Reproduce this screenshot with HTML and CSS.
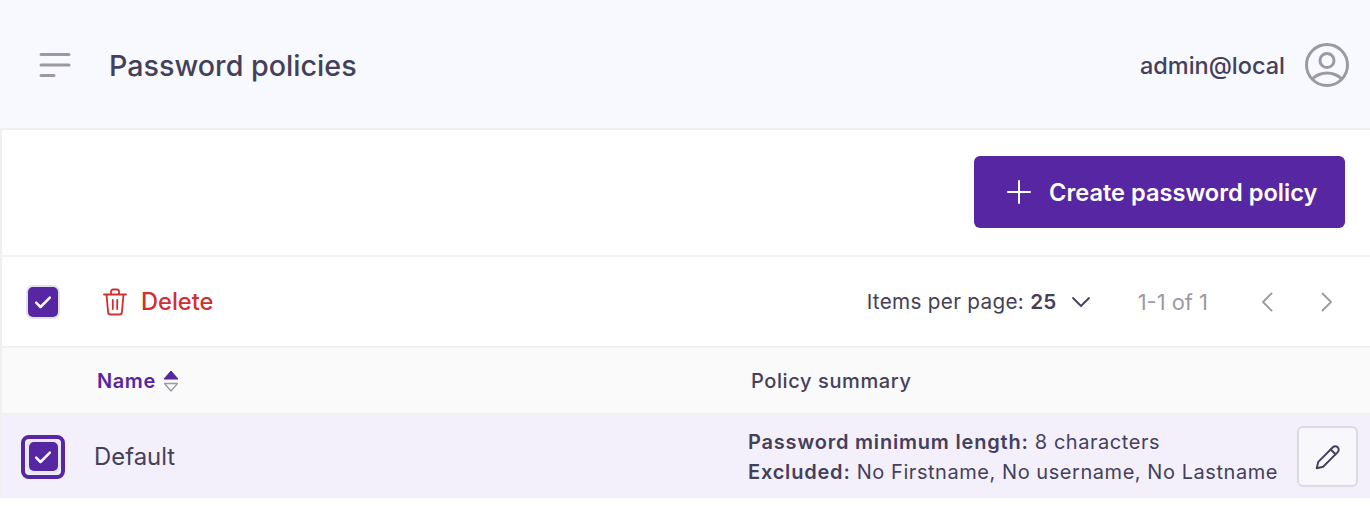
FILE: index.html
```html
<!DOCTYPE html>
<html lang="en">
<head>
    <meta charset="UTF-8">
    <title>Password policies</title>
    <link rel="stylesheet" href="styles.css">
</head>
<body>
    <header class="topbar">
        <div class="topbar-left">
            <svg class="menu-icon" width="32" height="26" viewBox="0 0 32 26" fill="none" stroke="#9c99a3" stroke-width="3" stroke-linecap="round">
                <path d="M2 2.500h28M2 13h28M2 23.500h13"/>
            </svg>
            <h1 class="page-title">Password policies</h1>
        </div>
        <div class="user">
            <span class="user-name">admin@local</span>
            <svg width="46" height="46" viewBox="0 0 46 46" fill="none" stroke="#9c99a3" stroke-width="3">
                <circle cx="23" cy="23" r="20.500"/>
                <circle cx="23" cy="18.500" r="7"/>
                <path d="M8 37c4.500-4 9-6 15-6s10.500 2 15 6"/>
            </svg>
        </div>
    </header>

    <main class="content">
        <!-- create button -->
        <div class="actions">
            <button class="create-button">
                <svg width="24" height="24" viewBox="0 0 24 24" fill="none" stroke="#fff" stroke-width="2" stroke-linecap="round">
                    <path d="M12 1v22M1 12h22"/>
                </svg>
                Create password policy
            </button>
        </div>

        <!-- bulk actions and paging -->
        <div class="bulk-bar">
            <div class="bulk-left">
                <span class="checkbox">
                    <svg width="20" height="20" viewBox="0 0 16 16" fill="none" stroke="#fff" stroke-width="2" stroke-linecap="round" stroke-linejoin="round">
                        <path d="M2.500 8.500l3.500 3.500 7.500-7.500"/>
                    </svg>
                </span>
                <a href="#" class="delete">
                    <svg width="26" height="28" viewBox="0 0 26 28" fill="none" stroke="#d32f2f" stroke-width="1.800" stroke-linecap="round" stroke-linejoin="round">
                        <path d="M2 6.500h22M9 6.500V3.500a2 2 0 0 1 2-2h4a2 2 0 0 1 2 2v3M4.500 6.500l1.600 17.600a2.500 2.500 0 0 0 2.500 2.400h8.800a2.500 2.500 0 0 0 2.500-2.400l1.600-17.600M10.800 12v9M15.200 12v9"/>
                    </svg>
                    Delete
                </a>
            </div>
            <div class="paging">
                <span class="per-page">Items per page: <strong>25</strong></span>
                <svg class="per-page-arrow" width="20" height="12" viewBox="0 0 20 12" fill="none" stroke="#45405a" stroke-width="1.800" stroke-linecap="round" stroke-linejoin="round">
                    <path d="M2 2l8 8 8-8"/>
                </svg>
                <span class="range">1-1 of 1</span>
                <svg class="prev" width="12" height="20" viewBox="0 0 12 20" fill="none" stroke="#9c99a3" stroke-width="1.800" stroke-linecap="round" stroke-linejoin="round">
                    <path d="M10.500 1.500L2 10l8.500 8.500"/>
                </svg>
                <svg class="next" width="12" height="20" viewBox="0 0 12 20" fill="none" stroke="#9c99a3" stroke-width="1.800" stroke-linecap="round" stroke-linejoin="round">
                    <path d="M1.500 1.500L10 10l-8.500 8.500"/>
                </svg>
            </div>
        </div>

        <!-- table -->
        <div class="table-head">
            <div class="col-name sorted">
                Name
                <svg width="18" height="24" viewBox="0 0 18 24" stroke-linejoin="round">
                    <path d="M9 2l7 8H2z" fill="#5726a2" stroke="#5726a2"/>
                    <path d="M2.500 14.500h13L9 22z" fill="none" stroke="#9c99a3" stroke-width="1.300"/>
                </svg>
            </div>
            <div class="col-summary">Policy summary</div>
        </div>
        <div class="table-row">
            <span class="row-check">
                <span class="checkbox">
                    <svg width="20" height="20" viewBox="0 0 16 16" fill="none" stroke="#fff" stroke-width="2" stroke-linecap="round" stroke-linejoin="round">
                        <path d="M2.500 8.500l3.500 3.500 7.500-7.500"/>
                    </svg>
                </span>
            </span>
            <div class="row-name">Default</div>
            <div class="row-summary">
                <div><strong>Password minimum length:</strong> 8 characters</div>
                <div><strong>Excluded:</strong> No Firstname, No username, No Lastname</div>
            </div>
            <button class="edit-button">
                <svg width="28" height="28" viewBox="0 0 26 26" fill="none" stroke="#45405a" stroke-width="1.800" stroke-linecap="round" stroke-linejoin="round">
                    <path d="M2.500 23.500l1.500-6L17.500 4a3 3 0 0 1 4.500 4.500L8.500 22z"/>
                    <path d="M15.500 6l4.500 4.500"/>
                </svg>
            </button>
        </div>
    </main>
</body>
</html>
```

FILE: styles.css
```css
* {
    box-sizing: border-box;
}

body {
    margin: 0;
    height: 506px;
    overflow: hidden;
    font-family: 'Inter', sans-serif;
    background-color: #fff;
    color: #45405a;
}

/* top bar */
.topbar {
    height: 128px;
    padding: 2px 20px 0 39px;
    display: flex;
    align-items: center;
    justify-content: space-between;
    background-color: #f8f9fe;
}

.topbar-left {
    display: flex;
    align-items: center;
}

.menu-icon {
    margin: 0 38px 0 0;
}

.page-title {
    margin: 0;
    font-size: 28.700px;
    font-weight: 500;
}

.user {
    display: flex;
    align-items: center;
    gap: 19px;
}

.user-name {
    font-size: 23.500px;
    font-weight: 500;
}

/* page content */
.content {
    border-top: 2px solid #f0f0f0;
    border-left: 2px solid #f0f0f0;
}

.actions {
    height: 127px;
    padding: 26px 25px 0 0;
    display: flex;
    justify-content: flex-end;
    align-items: flex-start;
    border-bottom: 2px solid #f0f0f0;
}

.create-button {
    width: 371px;
    height: 72px;
    padding: 0 0 0 33px;
    border: none;
    border-radius: 6px;
    display: flex;
    align-items: center;
    gap: 18px;
    background-color: #5726a2;
    color: #fff;
    font-family: inherit;
    font-size: 23.600px;
    font-weight: 600;
}

.bulk-bar {
    height: 91px;
    padding: 0 37px 0 26px;
    display: flex;
    align-items: center;
    justify-content: space-between;
    border-bottom: 2px solid #f0f0f0;
}

.bulk-left {
    display: flex;
    align-items: center;
    gap: 44px;
}

.checkbox {
    width: 30px;
    height: 30px;
    border-radius: 5px;
    display: flex;
    align-items: center;
    justify-content: center;
    background-color: #5726a2;
    box-shadow: 0 0 0 2px #e3e1ea;
}

.delete {
    display: flex;
    align-items: center;
    gap: 13px;
    color: #d32f2f;
    font-size: 23.600px;
    font-weight: 500;
    text-decoration: none;
}

.paging {
    display: flex;
    align-items: center;
}

.per-page {
    font-size: 20.700px;
    letter-spacing: 0.3px;
}

.per-page strong {
    font-weight: 600;
}

.per-page-arrow {
    margin-left: 14px;
}

.range {
    margin-left: 47px;
    font-size: 21.900px;
    color: #9c99a3;
}

.prev {
    margin-left: 53px;
}

.next {
    margin-left: 48px;
}

/* table */
.table-head {
    height: 67px;
    display: flex;
    align-items: center;
    background-color: #fafafa;
    border-bottom: 2px solid #f0f0f0;
    font-size: 20px;
    font-weight: 500;
    letter-spacing: 0.6px;
}

.col-name {
    width: 749px;
    padding-left: 95px;
    display: flex;
    align-items: center;
    gap: 6px;
}

.sorted {
    color: #5726a2;
    font-weight: 600;
}

.table-row {
    height: 83px;
    padding-left: 19px;
    display: flex;
    align-items: center;
    background-color: #f3f0fb;
}

.row-check {
    width: 44px;
    height: 44px;
    flex-shrink: 0;
    border: 4px solid #5726a2;
    border-radius: 8px;
    display: flex;
    align-items: center;
    justify-content: center;
}

.row-check .checkbox {
    width: 29px;
    height: 29px;
    box-shadow: 0 0 0 3px #e8e6ee;
}

.row-name {
    width: 654px;
    margin-left: 29px;
    font-size: 23.900px;
}

.row-summary {
    width: 549px;
    font-size: 20px;
    line-height: 30px;
    letter-spacing: 0.55px;
}

.row-summary strong {
    font-weight: 600;
    letter-spacing: 0.8px;
}

.edit-button {
    width: 61px;
    height: 61px;
    padding: 0;
    border: 2px solid #dcdae3;
    border-radius: 6px;
    display: flex;
    align-items: center;
    justify-content: center;
    background-color: #f8f7fc;
}
```
